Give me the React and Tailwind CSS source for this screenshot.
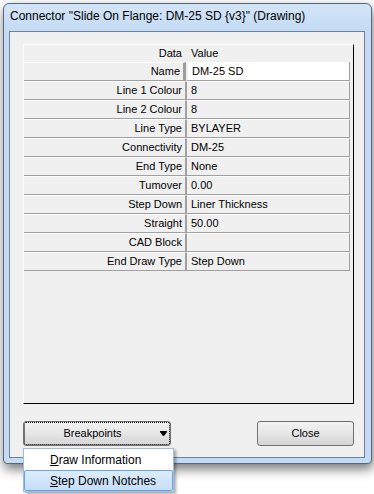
import React from "react";

const rows = [
  ["Name", "DM-25 SD"],
  ["Line 1 Colour", "8"],
  ["Line 2 Colour", "8"],
  ["Line Type", "BYLAYER"],
  ["Connectivity", "DM-25"],
  ["End Type", "None"],
  ["Tumover", "0.00"],
  ["Step Down", "Liner Thickness"],
  ["Straight", "50.00"],
  ["CAD Block", ""],
  ["End Draw Type", "Step Down"],
];

const DownArrow = () => (
  <svg width="7" height="5" viewBox="0 0 7 5" className="mr-[3px] shrink-0">
    <polygon points="0,0 7,0 7,1 4,5 3,5 0,1" fill="#000" />
  </svg>
);

const App = () => {
  return (
    <div className="w-[374px] h-[494px] bg-white overflow-hidden font-['Liberation_Sans',Arial,sans-serif] text-black">
      <div className="ml-[3px] mt-[3px] w-[369px] h-[461px] flex flex-col bg-[#c4dbf3] border border-[#56687c] rounded-t-[6px] rounded-b-[4px] shadow-[1px_5px_12px_rgba(0,0,0,0.55)]">
        {/* title bar */}
        <div className="h-[27px] shrink-0 flex items-center pl-[6px] pb-[3px] text-[12px] leading-none bg-gradient-to-b from-[#d3e5f8] to-[#c4dbf3] rounded-t-[6px]">
          Connector "Slide On Flange: DM-25 SD {"{v3}"}" (Drawing)
        </div>

        {/* client area */}
        <div className="ml-[5px] mr-[6px] mb-[5px] flex-1 flex flex-col border border-[#6f8299] bg-[#f0f0f0] pl-[13px] pr-[10px] pt-[12px]">
          <div className="h-[360px] flex flex-col border-t border-l border-white border-r border-b border-r-black border-b-black text-[11px] leading-none">
            {/* header */}
            <div className="h-[17px] flex items-center">
              <div className="w-[162px] text-right pr-[4px]">Data</div>
              <div className="pl-[5px]">Value</div>
            </div>
            {rows.map(([label, value], i) => (
              <div key={label} className="h-[19px] flex">
                <div
                  className={
                    "w-[162px] flex items-center justify-end pr-[3px] border-t border-t-white border-b border-b-[#a0a0a0] border-r " +
                    (i === 0 ? "border-r-[3px] border-r-[#9c9c9c] pr-[1px]" : "border-r-[#a0a0a0]")
                  }
                >
                  {label}
                </div>
                <div
                  className={
                    "w-[164px] flex items-center pl-[4px] border-b border-b-[#a0a0a0] border-r border-r-[#a0a0a0] " +
                    (i === 0 ? "bg-white border-l-2 border-l-[#f0f0f0]" : "border-l border-l-[#a0a0a0] border-t border-t-white")
                  }
                >
                  {value}
                </div>
              </div>
            ))}
          </div>

          {/* buttons */}
          <div className="mt-[17px] flex justify-between text-[11px] leading-none">
            <div className="relative">
              <button className="w-[148px] h-[25px] flex items-center rounded-[3px] border border-[#707070] bg-gradient-to-b from-[#f2f2f2] via-[#e6e6e6] to-[#d4d4d4] outline-1 outline-dotted outline-black outline-offset-[-2px]">
                <span className="flex-1 text-center pl-[1px]">Breakpoints</span>
                <DownArrow />
              </button>
              {/* dropdown menu */}
              <div className="absolute left-0 top-[27px] w-[151px] h-[44px] bg-white border border-[#9dbde4] shadow-[2px_2px_3px_rgba(0,0,0,0.35)] text-[12px] z-10">
                <div className="h-[21px] flex items-center pl-[26px]">
                  <span>
                    <span className="underline">D</span>raw Information
                  </span>
                </div>
                <div className="h-[21px] flex items-center pl-[25px] border border-[#6da2df] rounded-[2px] bg-gradient-to-b from-[#dcecfc] to-[#c5def8]">
                  <span>
                    <span className="underline">S</span>tep Down Notches
                  </span>
                </div>
              </div>
            </div>
            <button className="w-[97px] h-[25px] flex items-center justify-center rounded-[3px] border border-[#707070] bg-gradient-to-b from-[#f2f2f2] via-[#e6e6e6] to-[#d4d4d4]">
              Close
            </button>
          </div>
        </div>
      </div>
    </div>
  );
};

export default App;
